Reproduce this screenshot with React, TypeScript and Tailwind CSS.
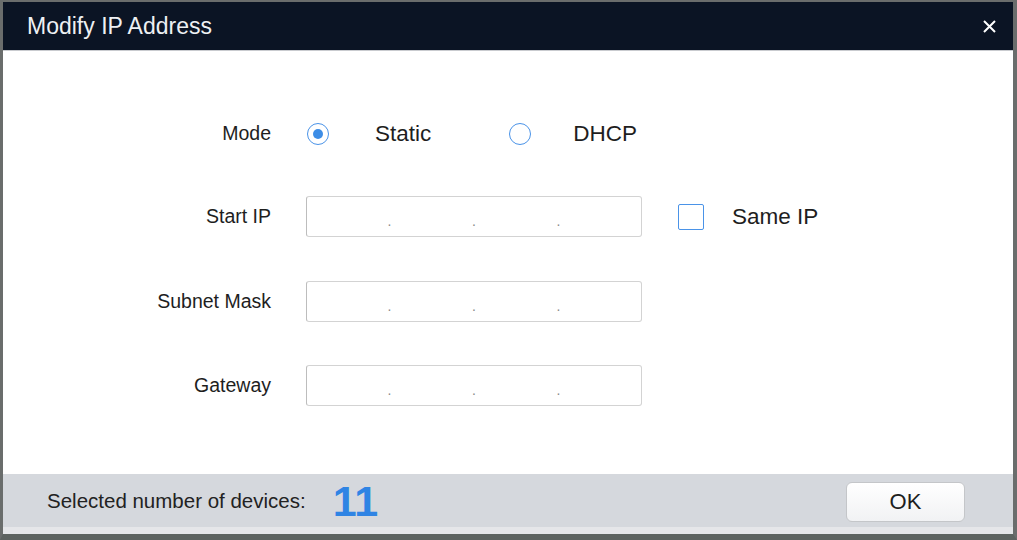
import React from 'react';

const font = { fontFamily: '"Liberation Sans", Arial, sans-serif' };

const IpInput = () => (
  <div className="flex h-[41px] w-[336px] items-end justify-evenly rounded-[3px] border border-[#d3d3d3] border-l-[#bdbdbd] bg-white pb-[8px]">
    <span className="text-[14px] leading-none text-[#8a8a8a]">.</span>
    <span className="text-[14px] leading-none text-[#8a8a8a]">.</span>
    <span className="text-[14px] leading-none text-[#8a8a8a]">.</span>
  </div>
);

const Radio = ({ checked }: { checked: boolean }) => (
  <span className="flex h-[22px] w-[22px] items-center justify-center rounded-full border-[1.5px] border-[#4a93e8] bg-white">
    {checked && <span className="h-[10px] w-[10px] rounded-full bg-[#3d8de6]" />}
  </span>
);

const Row = ({
  label,
  className,
  children
}: {
  label: string;
  className?: string;
  children: React.ReactNode;
}) => (
  <div className={`flex h-[41px] items-center ${className ?? ''}`}>
    <div className="w-[268px] text-right text-[19.5px] text-[#1e1e1e]">{label}</div>
    <div className="ml-[35px] flex items-center">{children}</div>
  </div>
);

export default function App() {
  return (
    <div
      style={font}
      className="flex h-[540px] w-[1017px] flex-col border-t-[2px] border-l-[3px] border-r-[4px] border-b-[6px] border-[#6a6d6c] border-b-[#5d6360]"
    >
      <div className="flex h-[48px] shrink-0 items-center justify-between bg-[#0b1424] pl-[24px] pr-[16px]">
        <span className="text-[23px] text-[#eef0f3]">Modify IP Address</span>
        <svg width="15" height="15" viewBox="0 0 15 15">
          <path d="M2 2 L13 13 M13 2 L2 13" stroke="#ffffff" strokeWidth="2" />
        </svg>
      </div>
      <div className="h-px shrink-0 bg-[#c9cbcf]" />

      <div className="flex flex-1 flex-col bg-white pt-[62px]">
        <Row label="Mode">
          <div className="ml-px flex items-center">
            <Radio checked />
            <span className="ml-[46px] text-[22.5px] text-[#1e1e1e]">Static</span>
            <span className="ml-[78px]">
              <Radio checked={false} />
            </span>
            <span className="ml-[42px] text-[22.5px] text-[#1e1e1e]">DHCP</span>
          </div>
        </Row>
        <Row label="Start IP" className="mt-[42px]">
          <IpInput />
          <span className="ml-[36px] h-[26px] w-[26px] rounded-[2px] border-[1.5px] border-[#4a93e8] bg-white" />
          <span className="ml-[28px] text-[22.5px] text-[#1e1e1e]">Same IP</span>
        </Row>
        <Row label="Subnet Mask" className="mt-[44px]">
          <IpInput />
        </Row>
        <Row label="Gateway" className="mt-[43px]">
          <IpInput />
        </Row>
      </div>

      <div className="flex h-[53px] shrink-0 items-center justify-between bg-[#d5d8dd] pl-[44px] pr-[48px] pt-[2px]">
        <div className="flex items-center">
          <span className="text-[20.5px] text-[#222]">Selected number of devices:</span>
          <span className="ml-[27px] text-[43px] font-bold leading-none text-[#2f84e4]">11</span>
        </div>
        <button className="h-[40px] w-[119px] rounded-[6px] border border-[#c4c6c9] bg-gradient-to-b from-white to-[#f1f2f4] text-[22px] text-[#1e1e1e]">
          OK
        </button>
      </div>
      <div className="h-[7px] shrink-0 bg-[#e5e6e9]" />
    </div>
  );
}
